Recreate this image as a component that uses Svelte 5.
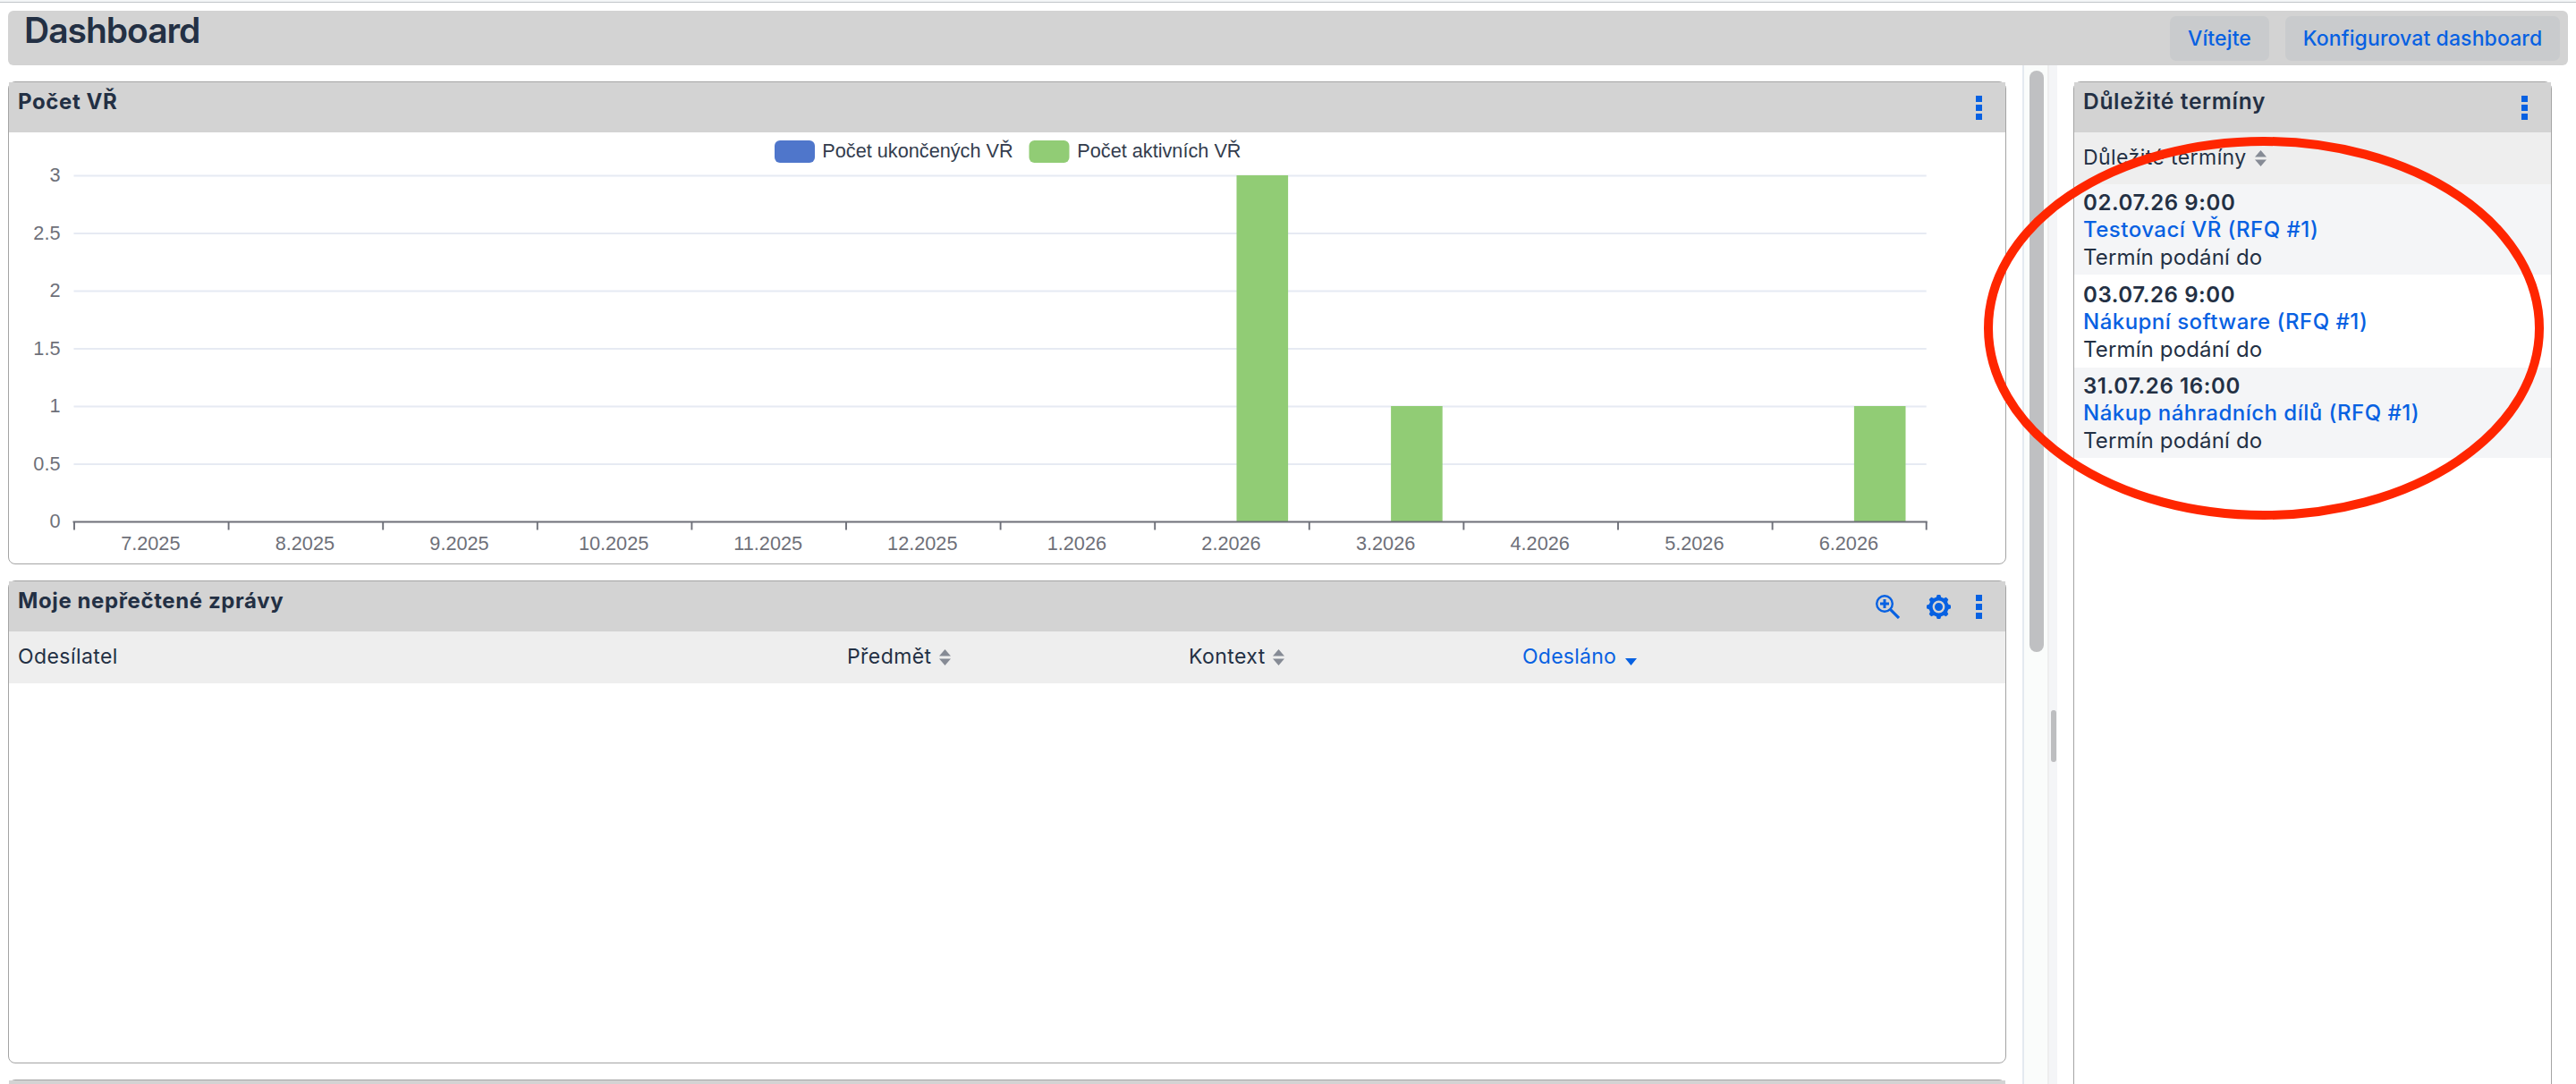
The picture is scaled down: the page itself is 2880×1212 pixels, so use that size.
<script>
	const months = ['7.2025', '8.2025', '9.2025', '10.2025', '11.2025', '12.2025', '1.2026', '2.2026', '3.2026', '4.2026', '5.2026', '6.2026'];
	const active = [0, 0, 0, 0, 0, 0, 0, 3, 1, 0, 0, 1];
	const levels = [3, 2.5, 2, 1.5, 1, 0.5, 0];

	const terms = [
		{ date: '02.07.26 9:00', name: 'Testovací VŘ (RFQ #1)' },
		{ date: '03.07.26 9:00', name: 'Nákupní software (RFQ #1)' },
		{ date: '31.07.26 16:00', name: 'Nákup náhradních dílů (RFQ #1)' },
	];

	// plot area inside the chart svg
	const left = 72.5;
	const bottom = 435.5;
	const unit = 129;
	const step = 172.6;

	const x = (i) => left + i * step;
	const y = (v) => bottom - v * unit;
</script>

{#snippet dots()}
	<svg class="dots" width="7" height="27" viewBox="0 0 7 27">
		<path d="M0 0h7v7H0zM0 10h7v7H0zM0 20h7v7H0z" fill="#0761e2" />
	</svg>
{/snippet}

{#snippet sort()}
	<svg class="sort" width="13" height="18" viewBox="0 0 13 18">
		<path d="M0 7.6h13L6.5 0zM0 10.4h13L6.5 18z" fill="#868b95" />
	</svg>
{/snippet}

<div class="page">
	<header>
		<h1>Dashboard</h1>
		<button class="hello">Vítejte</button>
		<button class="config">Konfigurovat dashboard</button>
	</header>

	<div class="body">
		<main>
			<section class="panel chart">
				<div class="head">
					<h2>Počet VŘ</h2>
					{@render dots()}
				</div>
				<svg width="2232" height="481" viewBox="0 0 2232 481">
					{#each levels as v}
						{#if v > 0}
							<line x1={left} x2={x(12)} y1={y(v)} y2={y(v)} stroke="#e6eaf3" stroke-width="2.2" />
						{/if}
						<text class="label" x="57.5" y={y(v) + 6.5} text-anchor="end">{v}</text>
					{/each}
					{#each active as v, i}
						{#if v > 0}
							<rect x={x(i) + 91.8} y={y(v) - 0.5} width="57.6" height={v * unit} fill="#91cc75" />
						{/if}
					{/each}
					<line x1={left - 1} x2={x(12) + 1} y1={bottom} y2={bottom} stroke="#6e7079" stroke-width="2" />
					{#each months as m, i}
						<line x1={x(i) + 0.5} x2={x(i) + 0.5} y1={bottom} y2={bottom + 9} stroke="#6e7079" stroke-width="1.9" />
						<text class="label" x={x(i) + step / 2 - 0.5} y={bottom + 31} text-anchor="middle">{m}</text>
					{/each}
					<line x1={x(12)} x2={x(12)} y1={bottom} y2={bottom + 9} stroke="#6e7079" stroke-width="1.9" />
					<rect x="856" y="9" width="45" height="25" rx="6" fill="#4f76cb" />
					<text class="legend" x="909.3" y="28">Počet ukončených VŘ</text>
					<rect x="1140.5" y="9" width="45" height="25" rx="6" fill="#91cc75" />
					<text class="legend" x="1194.3" y="28">Počet aktivních VŘ</text>
				</svg>
			</section>

			<section class="panel messages">
				<div class="head">
					<h2>Moje nepřečtené zprávy</h2>
					<svg class="zoom" width="27" height="27" viewBox="0 0 27 27" fill="none" stroke="#0761e2">
						<circle cx="10" cy="10" r="8.8" stroke-width="2.4" />
						<path d="M10 5v10M5 10h10" stroke-width="3" />
						<path d="M16.4 16.4L26 26" stroke-width="3.2" />
					</svg>
					<svg class="gear" width="27" height="27" viewBox="0 0 27 27">
						<g fill="#0761e2">
							<circle cx="13.5" cy="13.5" r="11" />
							{#each [0, 45, 90, 135] as a}
								<path d="M10.6 3L11.8 0h3.4l1.2 3v21l-1.2 3h-3.4l-1.2-3z" transform="rotate({a} 13.5 13.5)" />
							{/each}
						</g>
						<circle cx="13.5" cy="13.5" r="5.7" fill="#0761e2" stroke="#d3d3d3" stroke-width="2.4" />
					</svg>
					{@render dots()}
				</div>
				<div class="cols">
					<span>Odesílatel</span>
					<span>Předmět {@render sort()}</span>
					<span>Kontext {@render sort()}</span>
					<span class="sorted">Odesláno
						<svg class="desc" width="13" height="8" viewBox="0 0 13 8"><path d="M0 0h13L6.5 8z" fill="#0761e2" /></svg>
					</span>
				</div>
			</section>

			<section class="panel next"><div class="head"></div></section>
		</main>

		<div class="scroll"><div class="thumb"></div></div>
		<div class="splitter"><div class="grip"></div></div>

		<aside>
			<section class="panel terms">
				<div class="head">
					<h2>Důležité termíny</h2>
					{@render dots()}
				</div>
				<div class="cols"><span>Důležité termíny {@render sort()}</span></div>
				{#each terms as t}
					<div class="term">
						<b>{t.date}</b>
						<a href="#rfq">{t.name}</a>
						<span>Termín podání do</span>
					</div>
				{/each}
			</section>
		</aside>
	</div>

	<svg class="mark" width="630" height="432" viewBox="0 0 630 432">
		<ellipse cx="315" cy="216" rx="308" ry="209" fill="none" stroke="#ff2600" stroke-width="10" />
	</svg>
</div>

<style>
	:global(body) {
		background: #fff;
	}

	.page {
		position: relative;
		box-sizing: border-box;
		display: flex;
		flex-direction: column;
		width: 2880px;
		height: 1212px;
		overflow: hidden;
		border-top: 2px solid #f4f6f7;
		font-family: Inter, "Liberation Sans", sans-serif;
		color: #233044;
		background: #fff;
	}

	header {
		display: flex;
		align-items: center;
		box-sizing: border-box;
		height: 61px;
		margin: 9px 9px 0;
		padding: 0 9px 0 18px;
		border-radius: 6px;
		background: #d3d3d3;
	}

	.page::before {
		content: '';
		flex: none;
		height: 1px;
		background: #c0c4c9;
	}

	h1 {
		flex: 1;
		margin: -17px 0 0;
		font-size: 39px;
		font-weight: 600;
		line-height: 48px;
		letter-spacing: -1.03px;
	}

	button {
		height: 50px;
		padding: 0;
		border: 0;
		border-radius: 7px;
		background: #c9cbcd;
		color: #0761e2;
		font: 500 23px Inter, "Liberation Sans", sans-serif;
		letter-spacing: 0.12px;
		white-space: nowrap;
	}

	.hello {
		width: 111px;
		margin-right: 18px;
	}

	.config {
		width: 307px;
	}

	.body {
		display: flex;
		flex: 1;
		min-height: 0;
	}

	main {
		box-sizing: border-box;
		width: 2261px;
		padding: 18px 18px 0 9px;
		overflow: hidden;
	}

	.panel {
		box-sizing: border-box;
		border: 1px solid #a4a4a4;
		border-radius: 8px;
		background: #fff;
	}

	.chart {
		height: 540px;
		margin-bottom: 18px;
	}

	.chart > svg {
		display: block;
	}

	.messages {
		height: 540px;
		margin-bottom: 18px;
	}

	.next {
		height: 540px;
	}

	.head {
		display: flex;
		box-sizing: border-box;
		height: 56px;
		padding: 15px 26px 0 10px;
		background: #d3d3d3;
	}

	h2 {
		flex: 1;
		margin: -9px 0 0;
		font-size: 24px;
		font-weight: 700;
		line-height: 32px;
		letter-spacing: 0.6px;
	}

	.zoom {
		margin-right: 30px;
	}

	.gear {
		margin-right: 28px;
	}

	.label,
	.legend {
		font-family: "Liberation Sans", sans-serif;
		font-size: 21.7px;
		fill: #6e7079;
	}

	.legend {
		fill: #333c4d;
	}

	.cols {
		display: grid;
		grid-template-columns: 927px 382px 373px 1fr;
		align-items: center;
		box-sizing: border-box;
		height: 58px;
		padding: 0 9px 2px 10px;
		background: #eee;
		font-size: 23px;
		letter-spacing: 0.42px;
		white-space: nowrap;
	}

	.sort {
		margin-left: 2px;
		vertical-align: -2px;
	}

	.desc {
		margin-left: 3px;
		vertical-align: -2px;
	}

	.sorted {
		color: #0761e2;
		letter-spacing: 0.24px;
	}

	.scroll {
		box-sizing: border-box;
		width: 30px;
		padding: 6px 4px 0 6px;
		border-left: 2px solid #e4e9f0;
		border-right: 2px solid #eee;
		background: #fafcfb;
	}

	.thumb {
		width: 16px;
		height: 650px;
		border-radius: 8px;
		background: #bfc0c2;
	}

	.splitter {
		display: flex;
		align-items: center;
		width: 9px;
		padding-top: 360px;
		box-sizing: border-box;
		background: #f4f5f7;
	}

	.grip {
		width: 6px;
		height: 58px;
		margin-left: 2px;
		border-radius: 3px;
		background: #bdbec0;
	}

	aside {
		width: 535px;
		margin: 18px 0 0 18px;
	}

	.terms {
		height: 1300px;
	}

	.terms h2 {
		margin-top: -10px;
		font-weight: 600;
		font-size: 24.5px;
		letter-spacing: 0.7px;
	}

	.terms .cols {
		display: flex;
	}

	.term {
		display: flex;
		flex-direction: column;
		padding: 5.6px 9px 3.9px 10px;
		background: #f4f5f7;
		font-size: 24px;
		line-height: 30.6px;
	}

	.term:nth-child(even) {
		padding: 7.6px 9px 4.4px 10px;
		background: #fff;
	}

	.term b {
		font-weight: 600;
		letter-spacing: 0.6px;
	}

	.term a {
		color: #0761e2;
		font-weight: 500;
		letter-spacing: 0.48px;
		text-decoration: none;
	}

	.term span {
		letter-spacing: 0.15px;
	}

	/* hand-drawn highlight lying over the terms list */
	.mark {
		position: absolute;
		top: 149px;
		left: 2216px;
		pointer-events: none;
	}
</style>
